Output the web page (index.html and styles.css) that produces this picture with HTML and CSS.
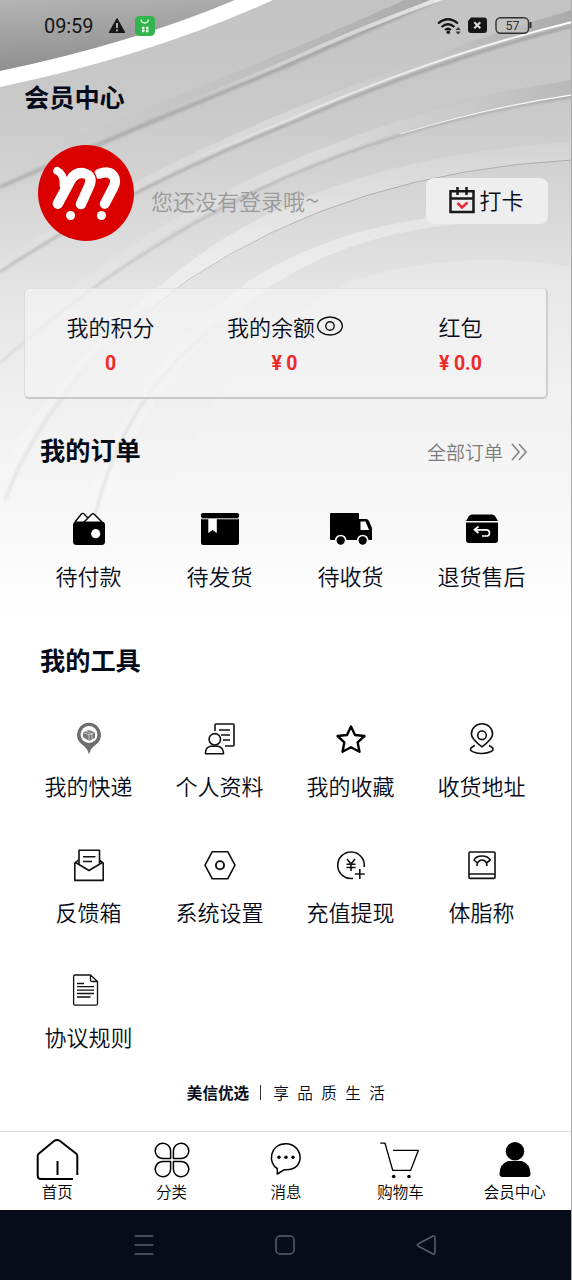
FILE: index.html
```html
<!DOCTYPE html>
<html lang="zh-CN">
<head>
<meta charset="utf-8">
<title>会员中心</title>
<link rel="stylesheet" href="styles.css">
</head>
<body>
<div class="phone">
  <svg class="backdrop" viewBox="0 0 572 620" aria-hidden="true">
    <defs>
      <linearGradient id="base" x1="0" y1="0" x2="0" y2="1">
        <stop offset="0" stop-color="#c3c3c3"/><stop offset=".17" stop-color="#c9c9c9"/><stop offset=".32" stop-color="#d6d6d6"/><stop offset=".46" stop-color="#e3e3e3"/><stop offset=".62" stop-color="#eeeeee"/><stop offset=".8" stop-color="#f6f6f6"/><stop offset="1" stop-color="#ffffff"/>
      </linearGradient>
      <linearGradient id="corner" x1="0" y1="0" x2=".25" y2="1">
        <stop offset="0" stop-color="#b4b4b4"/><stop offset="1" stop-color="#8e8e8e"/>
      </linearGradient>
      <linearGradient id="wedge" x1="0" y1="0" x2="1" y2="0">
        <stop offset="0" stop-color="#a0a0a0" stop-opacity="0"/><stop offset=".5" stop-color="#a0a0a0" stop-opacity=".15"/><stop offset="1" stop-color="#979797" stop-opacity=".75"/>
      </linearGradient>
      <linearGradient id="glow" x1="0" y1="0" x2="1" y2="0">
        <stop offset="0" stop-color="#fff" stop-opacity=".05"/><stop offset=".5" stop-color="#fff" stop-opacity=".25"/><stop offset="1" stop-color="#bbb" stop-opacity=".1"/>
      </linearGradient>
      <linearGradient id="edge" gradientUnits="userSpaceOnUse" x1="0" y1="0" x2="0" y2="530">
        <stop offset="0" stop-color="#969696"/><stop offset=".4" stop-color="#acacac"/><stop offset=".7" stop-color="#d4d4d4"/><stop offset="1" stop-color="#fff" stop-opacity="0"/>
      </linearGradient>
      <linearGradient id="shine" gradientUnits="userSpaceOnUse" x1="150" y1="0" x2="560" y2="0">
        <stop offset="0" stop-color="#fff" stop-opacity="0"/><stop offset="1" stop-color="#fff"/>
      </linearGradient>
      <linearGradient id="band" gradientUnits="userSpaceOnUse" x1="0" y1="140" x2="0" y2="520">
        <stop offset="0" stop-color="#fff" stop-opacity=".1"/><stop offset=".3" stop-color="#fff" stop-opacity=".38"/><stop offset=".6" stop-color="#fff" stop-opacity=".25"/><stop offset="1" stop-color="#fff" stop-opacity=".05"/>
      </linearGradient>
      <filter id="soft" x="-5%" y="-5%" width="110%" height="110%"><feGaussianBlur stdDeviation=".9"/></filter>
    </defs>
    <rect width="572" height="620" fill="url(#base)"/>
    <path d="M0 0H273Q150 56 0 87Z" fill="#fff"/>
    <path d="M0 0H235Q130 44 0 71Z" fill="url(#corner)"/>
    <path d="M0 163Q190 95 405 0H429Q350 36 286 65L100 145L0 187Z" fill="url(#wedge)" opacity=".75"/>
    <path d="M0 187Q50 165 100 144Q200 101 286 66Q360 33 434 1" fill="none" stroke="url(#edge)" stroke-width="4.5" opacity=".7" filter="url(#soft)"/>
    <path d="M150 119Q220 91 286 62Q360 28 442 -2" fill="none" stroke="url(#shine)" stroke-width="4"/>
    <path d="M0 261Q140 172 286 112Q440 48 572 10V23Q430 60 286 125Q120 192 0 272Z" fill="url(#glow)"/>
    <path d="M300 106Q440 48 572 10V23Q440 57 300 118Z" fill="url(#wedge)" opacity=".75"/>
    <path d="M0 272Q120 192 286 125Q430 62 572 26" fill="none" stroke="url(#edge)" stroke-width="3" opacity=".8" filter="url(#soft)"/>
    <path d="M200 156Q245 138 286 121Q430 57 572 22" fill="none" stroke="url(#shine)" stroke-width="2"/>
    <path d="M60 298Q160 216 286 163Q430 102 572 80V97Q420 119 286 177Q180 216 90 288Z" fill="url(#glow)"/>
    <path d="M370 126Q470 94 572 80V97Q470 111 370 141Z" fill="url(#wedge)" opacity=".4"/>
    <path d="M0 363Q130 247 286 177Q420 119 572 97" fill="none" stroke="url(#edge)" stroke-width="2.3" opacity=".7" filter="url(#soft)"/>
    <path d="M400 134Q490 107 572 95" fill="none" stroke="url(#shine)" stroke-width="1.2"/>
    <path d="M0 470Q60 365 167 280Q310 158 572 142V160Q350 172 190 280Q50 382 5 500Z" fill="url(#band)"/>
    <path d="M572 160Q350 172 188 280Q50 382 5 500" fill="none" stroke="url(#edge)" stroke-width=".9"/>
    <path d="M150 306Q48 388 5 500" fill="none" stroke="#d2d2d2" stroke-width="4" opacity=".4" filter="url(#soft)"/>
    <path d="M70 560Q105 390 250 280Q350 218 480 214L548 222Q390 215 286 277Q130 370 95 560Z" fill="url(#band)"/>
    <path d="M220 323Q115 400 90 540" fill="none" stroke="#d3d3d3" stroke-width="3" opacity=".5" filter="url(#soft)"/>
    <path d="M353 280Q460 248 572 267V560H165Q180 370 353 280Z" fill="url(#band)" opacity=".5"/>
  </svg>

  <header class="status">
    <span class="clock">09:59</span>
    <svg class="warn" viewBox="0 0 18 17"><path d="M9 1.5L16.8 15.5H1.2Z" fill="#171717" stroke="#171717" stroke-linejoin="round"/><path d="M9 6v5M9 12.6v1.6" stroke="#ccc" stroke-width="1.7"/></svg>
    <svg class="app" viewBox="0 0 20 20"><rect width="20" height="20" rx="4.5" fill="#32b44e"/><path d="M6 3.5Q6.5 7 9.7 7T13.5 3.5" fill="none" stroke="#e9ffe9" stroke-width="1.3"/><path d="M7 12h2.5M11 12h2.5M7 15h2.5M11 15h2.5" stroke="#e9ffe9" stroke-width="2.3"/></svg>
    <svg class="signals" viewBox="0 0 96 20"><g fill="none" stroke="#161616" stroke-width="2.2"><path d="M1 7.5Q11 -1 21 7.5M4.5 11Q11 5.5 17.5 11M8 14Q11 11.5 14 14"/></g><circle cx="11.3" cy="16.3" r="1.8" fill="#161616"/><path d="M18.5 14l2.6-3 2.6 3zM18.5 15.5l2.6 3 2.6-3z" fill="#333"/><path d="M34 1.5H47Q50 1.5 50 4.5V14Q50 17 47 17H34Q31 17 31 14V5Z" fill="#161616"/><path d="M37.3 6.2l6 6M43.3 6.2l-6 6" stroke="#ddd" stroke-width="2"/><rect x="59" y="1.7" width="32.5" height="15.6" rx="4.5" fill="#c2c2c2" fill-opacity=".6" stroke="#303030" stroke-width="1.4"/><path d="M93.5 6v6" stroke="#303030" stroke-width="2"/><text class="level" x="75.5" y="14" text-anchor="middle">57</text></svg>
  </header>

  <h1 class="title">会员中心</h1>

  <section class="profile">
    <svg class="avatar" viewBox="114 435 286 286"><circle cx="257" cy="578" r="143" fill="#da0000"/><g fill="none" stroke-linecap="round" stroke-linejoin="round"><path d="M296 521Q326 509 340 529Q348 542 339 560L313 610" stroke="#fff" stroke-width="30"/><path d="M212 538Q226 516 250 519Q280 526 266 558L242 611" stroke="#da0000" stroke-width="39"/><path d="M171 512Q192 522 190 555" stroke="#fff" stroke-width="23"/><path d="M173 610L212 538Q226 516 250 519Q280 526 266 558L242 611" stroke="#fff" stroke-width="31"/></g><circle cx="211" cy="645" r="13.5" fill="#fff"/><circle cx="303" cy="645" r="13.5" fill="#fff"/></svg>
    <span class="hint">您还没有登录哦<i>~</i></span>
    <div class="checkin">
      <svg viewBox="0 0 28 28"><g fill="none" stroke="#191919" stroke-width="2.5"><path d="M2.5 5.2H25.5V26H2.5ZM2.5 12.5H25.5M9.5 1v8M18.5 1v8"/></g><path d="M9.5 17l4.5 4.5 5.5-5" fill="none" stroke="#e72b36" stroke-width="2.5"/></svg>
      <span>打卡</span>
    </div>
  </section>

  <section class="wallet">
    <div class="stat"><span class="name">我的积分</span><b class="num">0</b></div>
    <div class="stat"><span class="name">我的余额<svg viewBox="0 0 28 22"><ellipse cx="14" cy="11" rx="12.3" ry="9"/><circle cx="14" cy="11" r="4.2"/></svg></span><b class="num">¥ 0</b></div>
    <div class="stat"><span class="name">红包</span><b class="num">¥ 0.0</b></div>
  </section>

  <div class="heading orders-heading">
    <h2>我的订单</h2>
    <span class="more">全部订单<svg viewBox="0 0 18 20"><path d="M2 2l7 8-7 8M9 2l7 8-7 8"/></svg></span>
  </div>
  <section class="grid orders">
    <div class="cell"><svg class="icon" viewBox="-24 -20 48 40"><path d="M-14-7L-8-14.5Q-6-17-4-14L-1-11M-6-6L2-14Q4-16.5 6-14L13-7" fill="#fff" stroke="#000" stroke-width="1.4"/><rect x="-16" y="-7.5" width="32" height="23.5" rx="3.5"/><circle cx="6.7" cy="4.7" r="4.6" fill="#fff"/></svg><span>待付款</span></div>
    <div class="cell"><svg class="icon" viewBox="-24 -20 48 40"><rect x="-19" y="-16" width="38" height="5" rx="1.8"/><path d="M-19-9.8H19V14Q19 16 17 16H-17Q-19 16-19 14Z"/><path d="M-19-10.4H19" stroke="#999" stroke-width="1"/><path d="M-11.7-10H-3.2V4L-7.4.9-11.7 4Z" fill="#fff"/></svg><span>待发货</span></div>
    <div class="cell"><svg class="icon" viewBox="-24 -20 48 40"><path d="M-20-16H7Q8-16 8-15V-10H15Q17-10 18-8L21-1V11H-20Q-21 11-21 10V-15Q-21-16-20-16Z"/><path d="M9.5-7.5H14.5L18 1H9.5Z" fill="#fff"/><g stroke="#fff" stroke-width="1.7"><circle cx="-10.3" cy="11.5" r="5"/><circle cx="11.7" cy="11.5" r="5"/></g></svg><span>待收货</span></div>
    <div class="cell"><svg class="icon" viewBox="-24 -20 48 40"><path d="M-10-14.5H10Q12-14.5 13-13L16-8H-16L-13-13Q-12-14.5-10-14.5ZM-16-6.5H16V11Q16 14 13 14H-13Q-16 14-16 11Z"/><path d="M-3.5-2.5L-7.5.8-3.5 4M-7 .8H4Q7.5.8 7.5 4T4 7H0" fill="none" stroke="#fff" stroke-width="1.7"/></svg><span>退货售后</span></div>
  </section>

  <div class="heading tools-heading"><h2>我的工具</h2></div>
  <section class="grid tools">
    <div class="cell"><svg class="icon" viewBox="-24 -20 48 40"><path d="M0 15.5Q-1.5 9-7 5.5A12 12 0 1 1 7 5.5Q1.5 9 0 15.5Z" fill="#6e6e6e"/><circle cy="-4.5" r="8.4" fill="#fff"/><path d="M-6-6.5L0-9 6-6.5V-1L0 2-6-2Z" fill="#777"/><path d="M-5.5-6.2L0-4.3 5.5-6.2M0-4V2M-3-8L3-5V0" fill="none" stroke="#ddd" stroke-width=".8"/></svg><span>我的快递</span></div>
    <div class="cell"><svg class="icon line" viewBox="-24 -20 48 40"><path d="M-5-8V-14Q-5-15-4-15H13Q14-15 14-14V6Q14 7 13 7H5M-1-9H10M1-4H10M3 1H10"/><circle cx="-5.2" cy=".3" r="5.7"/><path d="M-14.6 14.7Q-14.5 7.5-9 7.2H-2Q3.2 8 3.6 14.7Z"/></svg><span>个人资料</span></div>
    <div class="cell"><svg class="icon" viewBox="-24 -20 48 40"><path d="M0-12.5L4-4 13.5-3 6.6 3.3 8.5 12.7 0 8.3-8.5 12.7-6.6 3.3-13.5-3-4-4Z" fill="none" stroke="#000" stroke-width="2.4" stroke-linejoin="round"/></svg><span>我的收藏</span></div>
    <div class="cell"><svg class="icon line" viewBox="-24 -20 48 40"><path d="M0 7.8Q-10.6 0-10.6-5A10.6 10.3 0 0 1 10.6-5Q10.6 0 0 7.8Z"/><circle cy="-3.7" r="4.3"/><path d="M-7 6.5C-19 12-4 14.7 0 14.5S18 12 7 6.5"/></svg><span>收货地址</span></div>
    <div class="cell"><svg class="icon line" viewBox="-24 -20 48 40"><path d="M-10-1V-14.8H10.5V-1M-10.5-5L-14.2-2V15.4H14.2V-2L10.5-5M-14.2-3L0 5.5 14.2-3M-6-8.3H6.5M-6-3.5H3"/></svg><span>反馈箱</span></div>
    <div class="cell"><svg class="icon line" viewBox="-24 -20 48 40"><path d="M-7.7-13.3H7.7L15 .2 7.7 13.8H-7.7L-15 .2Z"/><circle cy=".2" r="4.1" stroke-width="1.9"/></svg><span>系统设置</span></div>
    <div class="cell"><svg class="icon line" viewBox="-24 -20 48 40"><path d="M2 13.4A13.3 13.3 0 1 1 13.2 2M-4-6L0-1 4-6M0-1V6M-4.5-.8H4.5M-4.5 2.5H4.5M8.8 4V14M3.8 9H13.8"/></svg><span>充值提现</span></div>
    <div class="cell"><svg class="icon line" viewBox="-24 -20 48 40"><rect x="-13" y="-13" width="26" height="26.4" rx="1"/><path d="M-13 9H13M-8-5Q-6-9 0-9T8.3-5L4.5-2Q3-5 0-5T-4.5-2ZM-4.5-2L-5.2 1M4.5-2L5 1"/></svg><span>体脂称</span></div>
    <div class="cell"><svg class="icon line thin" viewBox="-24 -20 48 40"><path d="M1.5-15H-14Q-15.4-15-15.4-13.6V13.8Q-15.4 15.2-14 15.2H7Q8.5 15.2 8.5 13.8V-8.5L1.5-15V-10Q1.5-8.5 3-8.5H8.5M-12-6.5H-5M-12-3.3H5M-12 .2H5M-12 3.5H5M-12 7H1.5"/></svg><span>协议规则</span></div>
  </section>

  <p class="slogan"><b>美信优选</b><i></i><span>享品质生活</span></p>

  <nav class="tabs">
    <div class="tab"><svg viewBox="-24 -22 48 44"><path d="M20.3 15V-4Q20.3-5.5 19-6.5L3-19Q0-21-3-19L-18-6.5Q-19.3-5.5-19.3-4V15.5Q-19.3 19-16 19H16M.5 1V15" stroke-width="2"/></svg><span>首页</span></div>
    <div class="tab"><svg viewBox="-24 -22 48 44"><path d="M-1.4-1.4H-9A7.7 7.7 0 1 1-1.4-9ZM1.4-1.4H9A7.7 7.7 0 1 0 1.4-9ZM-1.4 1.4H-9A7.7 7.7 0 1 0-1.4 9ZM1.4 1.4H9A7.7 7.7 0 1 1 1.4 9Z" stroke-width="1.5"/></svg><span>分类</span></div>
    <div class="tab"><svg viewBox="-24 -22 48 44"><path d="M-8.7 14V8.5C-18 4-17-16.2 0-16.2S20.5 9.8 0 9.8H-2Z" stroke-width="1.5"/><g fill="#000" stroke="none"><circle cx="-7" cy="-2.8" r="1.7"/><circle cy="-2.8" r="1.7"/><circle cx="7" cy="-2.8" r="1.7"/></g></svg><span>消息</span></div>
    <div class="tab"><svg viewBox="-24 -22 48 44"><path d="M-19.7-16.8H-15L-7.3 10.3H10.7L18.4-9.7H-7" stroke-width="1.3"/><g fill="#000" stroke="none"><circle cx="-6.3" cy="16.5" r="1.8"/><circle cx="9" cy="16.5" r="1.8"/></g></svg><span>购物车</span></div>
    <div class="tab"><svg viewBox="-24 -22 48 44"><g fill="#000" stroke="none"><circle cy="-8.7" r="9.2"/><path d="M-7 1H7Q15.5 4 15.5 14 15.5 17 12.5 17H-12.5Q-15.5 17-15.5 14-15.5 4-7 1Z"/></g></svg><span>会员中心</span></div>
  </nav>

  <footer class="system">
    <svg viewBox="0 0 20 20"><path d="M.5 1H19.5M.5 10H19.5M.5 19H19.5"/></svg>
    <svg viewBox="0 0 20 20"><rect x="1" y="1" width="18" height="18" rx="4"/></svg>
    <svg viewBox="0 0 20 20"><path d="M2 9Q.5 10 2 11L17 19Q19 19.5 19 17.5V2.5Q19 .5 17 1Z"/></svg>
  </footer>
</div>
</body>
</html>
```
FILE: styles.css
```css
* { box-sizing: border-box; }
body { margin: 0; background: #fff; }
.phone {
  position: relative;
  width: 572px;
  height: 1280px;
  display: flex;
  flex-direction: column;
  overflow: hidden;
  color: #060b1a;
  font-family: "Noto Sans CJK SC", sans-serif;
  font-size: 22px;
  font-weight: 350;
  border-right: 1px solid #aaa;
}
.phone > * { position: relative; flex-shrink: 0; }
.phone > .backdrop { position: absolute; left: 0; top: 0; width: 572px; height: 620px; }
svg { display: block; flex-shrink: 0; }
h1, h2, p { margin: 0; }

.status { height: 51px; padding: 0 38px 0 44px; display: flex; align-items: center; color: #151515; font-family: Roboto, sans-serif; font-weight: 400; }
.clock { font-size: 20px; letter-spacing: -.1px; width: 64px; }
.warn { width: 18px; height: 17px; margin-right: 9px; }
.app { width: 20px; height: 20px; }
.signals { width: 96px; height: 20px; margin-left: auto; }
.level { font-size: 12.5px; font-weight: 400; fill: #333; }
.title { height: 94px; padding: 26.5px 0 0 24px; font-size: 25.2px; line-height: 36px; font-weight: 700; }
.profile { height: 96px; padding: 0 23px 0 38px; display: flex; align-items: center; }
.avatar { width: 96px; height: 96px; margin-right: 17px; }
.hint { color: #999; padding-top: 14px; }
.hint i { font-style: normal; font-size: 26px; line-height: 22px; }
.checkin { margin: 15px 0 0 auto; width: 122px; height: 46px; border-radius: 8px; background: #eeeeee; display: flex; align-items: center; justify-content: center; gap: 3px; }
.checkin svg { width: 28px; height: 28px; margin: -1px 0 0 -2px; }
.checkin span { margin-top: -3px; }

.wallet { margin: 47px 23px 0 24px; height: 111px; display: flex; border: 1px solid #dcdcdc; border-right: 2px solid #cfcfcf; border-bottom: 2px solid #c9c9c9; border-top-color: #e0e0e0; border-radius: 5px; background: rgba(244, 244, 244, .7); }
.stat { flex: 1; display: flex; flex-direction: column; align-items: center; padding-top: 20.5px; }
.stat:nth-child(2) { padding-left: 3px; }
.stat:last-child { padding-left: 5px; }
.name { display: flex; align-items: center; line-height: 32px; }
.name svg { width: 28px; height: 22px; margin: 1px -2px 0 1px; fill: none; stroke: #111; stroke-width: 1.4; }
.num { color: #ed2929; font-family: Roboto, sans-serif; font-size: 19.5px; font-weight: 700; line-height: 24px; margin-top: 10.5px; word-spacing: -.5px; }

.heading { display: flex; align-items: center; justify-content: space-between; height: 40px; padding: 0 43px 0 40px; }
.heading h2 { font-size: 25.2px; line-height: 36px; font-weight: 700; margin-top: -3px; }
.orders-heading { margin-top: 31px; }
.tools-heading { margin-top: 50px; }
.more { display: flex; align-items: center; gap: 7px; color: #7b7b7b; font-size: 19px; padding-top: 3px; }
.more svg { width: 18px; height: 20px; fill: none; stroke: #888; stroke-width: 1.7; }
.grid { display: grid; grid-template-columns: repeat(4, 131px); grid-auto-rows: 125.5px; padding-left: 23px; }
.cell { display: flex; flex-direction: column; align-items: center; }
.cell span { line-height: 32px; margin-top: 10px; }
.icon { width: 48px; height: 40px; }
.line { fill: none; stroke: #111; stroke-width: 1.6; stroke-linejoin: round; }
.thin { stroke-width: 1.3; }
.orders { margin-top: 39px; height: 81px; }
.tools { margin-top: 39px; height: 350px; }

.slogan { display: flex; align-items: center; justify-content: center; height: 24px; margin-top: 11px; font-size: 15.6px; }
.slogan b { font-weight: 700; }
.slogan i { width: 1px; height: 15px; background: #333; margin: 0 12px 0 11px; }
.slogan span { letter-spacing: 8.4px; margin-right: -9px; }
.phone > .tabs { position: absolute; top: 1131px; left: 0; width: 572px; height: 79px; }
.tabs { display: flex; border-top: 1px solid #dedede; background: #fff; }
.tab { flex: 1; display: flex; flex-direction: column; align-items: center; padding-top: 6px; color: #000; font-size: 15.5px; }
.tab svg { width: 48px; height: 44px; fill: none; stroke: #000; stroke-linejoin: round; }
.tab span { line-height: 20px; margin-top: -1px; }
.phone > .system { position: absolute; left: 0; bottom: 0; width: 572px; height: 70px; }
.system { background: #070c1a; display: flex; align-items: center; justify-content: center; gap: 121px; padding-right: 3px; }
.system svg { width: 20px; height: 20px; fill: none; stroke: #5b5f6a; stroke-width: 1.5; }
```
